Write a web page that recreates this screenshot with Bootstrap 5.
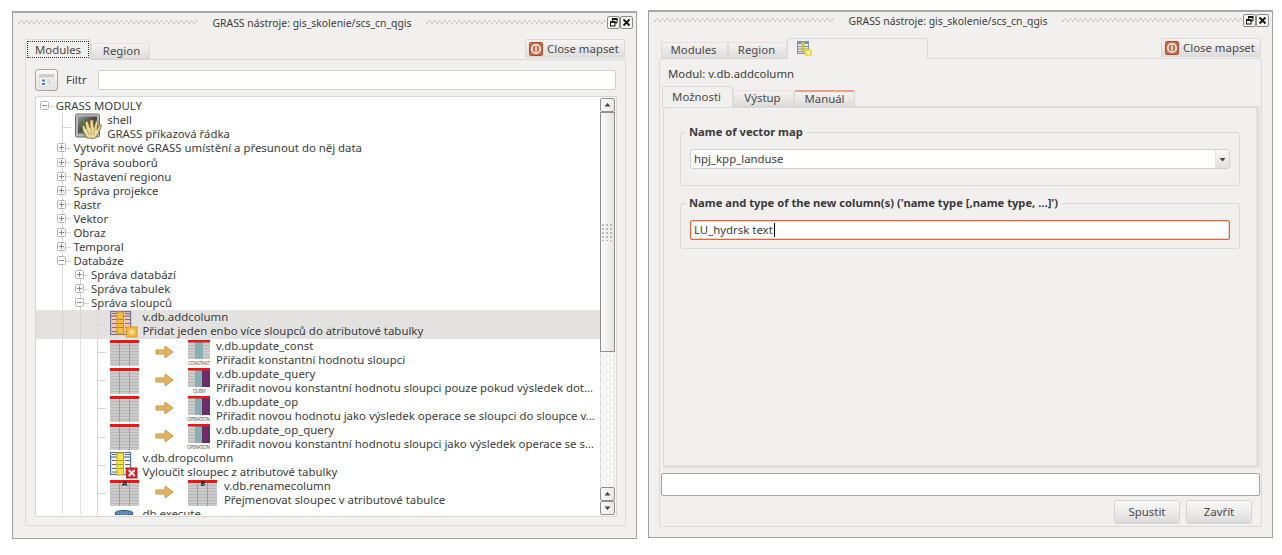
<!DOCTYPE html>
<html lang="cs">
<head>
<meta charset="utf-8">
<meta name="viewport" content="width=device-width, initial-scale=1">
<title>GRASS nástroje</title>
<link href="https://cdn.jsdelivr.net/npm/bootstrap@5.3.0/dist/css/bootstrap.min.css" rel="stylesheet">
<style>
body{width:1282px;height:555px;overflow:hidden;background:#fff;font-family:"Noto Sans","Open Sans",sans-serif;font-size:11.4px;line-height:14px;color:#3c3c3c;padding:10px 0 0 12px;gap:11px}
svg{display:block;flex:none}
.dock{width:625px;height:528px;background:#f1f0ee;border:1px solid #a0a0a0;border-top:2px solid #a9a9a9;flex:none}
.dock-a{margin-top:1px}
.dock-b{height:528px}
.titlebar{height:26px;padding:2px 3px 9px 5px}
.dock-b .titlebar{padding-top:1px;padding-bottom:10px}
.grip{height:5px;width:180px;background:radial-gradient(circle at 1px 1px,#d0cfcd .8px,transparent 1.1px) 0 2px/5px 5px,radial-gradient(circle at 1px 1px,#d0cfcd .8px,transparent 1.1px) 2.5px 0/5px 5px}
.caption{width:228px;font-size:10.4px;text-align:center;white-space:nowrap}
.tbtn{width:13px;height:13px;border:1px solid #8b8b8b;border-radius:2px;background:#f6f6f5}
.tabrow{height:21px;margin:0 11px 0 12px;position:relative;z-index:1}
.qtab{border:1px solid #dcdad8;border-bottom-color:#d5d3d1;border-top-color:#f0dcd5;background:linear-gradient(#f4f3f2,#dddcda);height:17px;white-space:nowrap;border-radius:2px 2px 0 0;color:#4a4a4a}
.qtab.on{background:#f1f0ee;border:1px solid #dcdad8;border-bottom:0;height:21px}
.closer{width:100px;height:19px;border:1px solid #dcdad8;border-radius:2px 2px 0 0;background:linear-gradient(#f6f5f4,#dedddb);gap:4px;padding-left:3px;color:#4a4a4a;white-space:nowrap}
.pane{border:1px solid #dcdad8;border-radius:2px;margin-top:-1px}
.pane-a{margin-left:12px;width:601px;height:467px;padding:9px}
.focus{border:1px dotted #333;margin:1px 2px 1px 1px;height:17px;width:62px;text-align:center;line-height:16px}
.tool{width:23px;height:22px;border:1px solid #a5a4a2;border-radius:3px;background:linear-gradient(#f8f8f7,#e6e5e3)}
.field{background:#fff;border:1px solid #d4d2d0;border-radius:2px}
.tree{width:582px;height:421px;margin-top:5px;border:1px solid #d8d6d4;padding:1px 1px 1px 0;border-radius:2px;background:#fff;overflow:hidden}
.rows{width:565px;overflow:hidden;color:#3c3c3c;padding-top:1.2px}
.r{height:14.08px;display:flex;white-space:nowrap;line-height:14.08px}
.r.dbl{height:28.16px}
.r.sel{background:#e3e2e0}
.g{width:17.6px;flex:none;background:linear-gradient(#d0d0d0,#d0d0d0) 8.5px 0/1px 100% no-repeat;-webkit-mask:repeating-linear-gradient(#000 0 1.2px,rgba(0,0,0,.35) 1.2px 2px)}
.g0{width:17.6px;flex:none}
.gx{width:17.6px;flex:none;background:linear-gradient(#d5d5d5,#d5d5d5) 8.5px 0/1px 100% no-repeat,linear-gradient(#d5d5d5,#d5d5d5) 9px 50%/9px 1px no-repeat}
.gx.first{background:linear-gradient(#d5d5d5,#d5d5d5) 9px 50%/9px 1px no-repeat}
.gx svg{margin:2px 0 0 3.6px}
.t{padding-left:2.2px}
.ic{width:36px;padding-left:3.5px;flex:none}
.ic2{width:109.5px;padding-left:4px;flex:none}
.ic2.wide{width:117.5px}
.sb{width:15px;flex:none}
.sbtn{height:14px;border:1px solid #8f8f8f;border-radius:2px;background:linear-gradient(90deg,#fdfdfd,#e9e8e7)}
.thumb{height:240px;border:1px solid #8f8f8f;background:linear-gradient(90deg,#fbfbfb,#e6e5e4)}
.trough{border:1px dotted #c4c4c4;border-width:0 1px;background:repeating-conic-gradient(#efefef 0 25%,#fff 0 50%) 0 0/2px 2px}
.dots{width:11px;height:17px;background:radial-gradient(circle at 1px 1px,#bbb .9px,transparent 1.1px) 0 0/4px 4px}
.pane-b{margin-left:10px;width:603px;height:469px;padding:0 1px}
.modul{height:27px;padding:8px 0 0 7px}
.subtabs{height:21px;margin-left:1px;position:relative;z-index:1}
.inner{height:362px;margin:-1px 0 0 2px;border:1px solid #dcdad8;border-top:2px solid #dedcda;border-right:4px solid #e1dfdd;border-bottom:3px solid #e1dfdd;border-radius:3px;padding:24px 16px 0 16px}
.grp{border:1px solid #dcdad8;border-radius:3px;padding:0 9px}
.leg{height:14px;margin-top:-8px;margin-left:-4px;padding:0 4px 0 3px;background:#f1f0ee;width:max-content;font-weight:700;font-size:11.2px;color:#3a3a3a}
.push{width:66px;height:23px;border:1px solid #d6d4d2;border-radius:3px;background:linear-gradient(#f9f9f8,#dededc);box-shadow:0 1px 0 #dcdad8;color:#4a4a4a}
</style>
</head>
<body class="d-flex align-items-start">
<svg width="0" height="0" class="position-absolute">
<defs>
<linearGradient id="shellg" x2="1" y2="1"><stop stop-color="#999"/><stop offset=".5" stop-color="#444"/><stop offset="1" stop-color="#777"/></linearGradient>
<symbol id="plus" viewBox="0 0 9 9"><rect x=".5" y=".5" width="8" height="8" rx="1" fill="#fff" stroke="#b4b4b4"/><path d="M2 4.500h5M4.500 2v5" stroke="#8a8a8a"/></symbol>
<symbol id="minus" viewBox="0 0 9 9"><rect x=".5" y=".5" width="8" height="8" rx="1" fill="#fff" stroke="#b4b4b4"/><path d="M2 4.500h5" stroke="#8a8a8a"/></symbol>
<symbol id="grid" viewBox="0 0 29 26"><rect width="29" height="26" fill="#cbcbcb"/><path d="M0 5.500h29M0 8.500h29M0 11.500h29M0 14.500h29M0 17.500h29M0 20.500h29M0 23.500h29" stroke="#b8b8b8"/><path d="M9.500 3v23M19.500 3v23" stroke="#8c8c8c" stroke-width=".7"/><rect width="29" height="3" fill="#f01414"/></symbol>
<symbol id="arrow" viewBox="0 0 19 14"><path d="M1 5h9V1l8 6-8 6V9H1z" fill="#e6b15c" stroke="#c8974a"/></symbol>
<symbol id="const" viewBox="0 0 22 20"><rect width="22" height="19" fill="#ccc"/><path d="M0 5.500h22M0 8.500h22M0 11.500h22M0 14.500h22M0 17.500h22" stroke="#bababa"/><rect x="7" y="2" width="8" height="17" fill="#87b0b0"/><rect width="22" height="2.500" fill="#ee1616"/></symbol>
<symbol id="query" viewBox="0 0 22 20"><rect width="22" height="19" fill="#ccc"/><path d="M0 5.500h7M0 8.500h7M0 11.500h7M0 14.500h7M0 17.500h7" stroke="#bababa"/><rect x="7" y="2" width="7" height="17" fill="#87b0b0"/><rect x="14" y="2" width="8" height="17" fill="#6a2c6a"/><rect width="22" height="2.500" fill="#ee1616"/></symbol>
<symbol id="power" viewBox="0 0 14 14"><rect x=".5" y=".5" width="13" height="13" rx="1.500" fill="#cf6a45" stroke="#b24c33"/><circle cx="7" cy="7" r="4.200" fill="none" stroke="#fff" stroke-width="1.500"/><path d="M7 4.500v5" stroke="#fff" stroke-width="1.500"/></symbol>
<symbol id="float" viewBox="0 0 11 11"><path d="M4.500 4V2h4.500v4H7" fill="none" stroke="#111"/><path d="M4 2h5.500" stroke="#111" stroke-width="2"/><rect x="2.500" y="5" width="4.500" height="4" fill="#fff" stroke="#111"/><path d="M2 5h5.500" stroke="#111" stroke-width="1.800"/></symbol>
<symbol id="cross" viewBox="0 0 11 11"><path d="M2.500 2.500l6 6M8.500 2.500l-6 6" stroke="#111" stroke-width="1.800"/></symbol>
<symbol id="up" viewBox="0 0 13 12"><path d="M3.500 7.500l3-3.500 3 3.500z" fill="#444"/></symbol>
<symbol id="down" viewBox="0 0 13 12"><path d="M3.500 4.500l3 3.500 3-3.500z" fill="#444"/></symbol>
</defs>
</svg>

<section class="dock dock-a">
  <div class="titlebar d-flex align-items-center">
    <div class="grip"></div><div class="caption">GRASS nástroje: gis_skolenie/scs_cn_qgis</div><div class="grip"></div>
    <div class="tbtn ms-auto"><svg width="11" height="11"><use href="#float"/></svg></div><div class="tbtn"><svg width="11" height="11"><use href="#cross"/></svg></div>
  </div>
  <div class="tabrow d-flex align-items-end">
    <div class="qtab on" style="width:66px"><div class="focus">Modules</div></div>
    <div class="qtab text-center" style="width:59px;padding-left:2px">Region</div>
    <div class="closer d-flex align-items-center ms-auto mb-auto"><svg width="14" height="14"><use href="#power"/></svg>Close mapset</div>
  </div>
  <div class="pane pane-a">
    <div class="d-flex align-items-center">
      <div class="tool d-flex align-items-center justify-content-center"><svg width="15" height="13" viewBox="0 0 15 13"><rect x=".5" y=".5" width="14" height="12" fill="#f5f5f5" stroke="#ddd"/><path d="M0 2h15" stroke="#ccc" stroke-width="3"/><path d="M3 6.500h3M3 10h3" stroke="#3b82d0" stroke-width="2"/><path d="M8 6h5M8 10h5M8 8h4" stroke="#c5c5c5"/></svg></div>
      <div style="width:40px;padding-left:8px">Filtr</div>
      <div class="field flex-fill" style="height:20px"></div>
    </div>
    <div class="tree d-flex">
      <div class="rows">
        <div class="r"><div class="gx first"><svg width="9" height="9"><use href="#minus"/></svg></div><div class="t">GRASS MODULY</div></div>
        <div class="r dbl"><div class="g0"></div><div class="gx"></div><div class="ic">
          <svg width="27" height="27" viewBox="0 0 27 27"><rect x=".5" y="1" width="24" height="23" rx="1.500" fill="#b8b8b4" stroke="#6e6e6a"/><rect x="3" y="3.500" width="19" height="17" fill="url(#shellg)"/><path d="M9 5v18M5 12l10 10M4 19h10" stroke="#35b23a"/><path d="M12 25L8 18q-2-6 1-6l2 4-1-7 3-1 2 7V7l3-.5 1 8 2-7 2 1-1 8 3-5 1.500 1-3 8-4 5z" fill="#ecd79c" stroke="#7b5c20" stroke-width=".8"/><path d="M14 22l-2-6M16 22l0-7M18 22l2-7" stroke="#b8934c" stroke-width=".7"/></svg></div><div>shell<br>GRASS příkazová řádka</div></div>
        <div class="r"><div class="g0"></div><div class="gx"><svg width="9" height="9"><use href="#plus"/></svg></div><div class="t">Vytvořit nové GRASS umístění a přesunout do něj data</div></div>
        <div class="r"><div class="g0"></div><div class="gx"><svg width="9" height="9"><use href="#plus"/></svg></div><div class="t">Správa souborů</div></div>
        <div class="r"><div class="g0"></div><div class="gx"><svg width="9" height="9"><use href="#plus"/></svg></div><div class="t">Nastavení regionu</div></div>
        <div class="r"><div class="g0"></div><div class="gx"><svg width="9" height="9"><use href="#plus"/></svg></div><div class="t">Správa projekce</div></div>
        <div class="r"><div class="g0"></div><div class="gx"><svg width="9" height="9"><use href="#plus"/></svg></div><div class="t">Rastr</div></div>
        <div class="r"><div class="g0"></div><div class="gx"><svg width="9" height="9"><use href="#plus"/></svg></div><div class="t">Vektor</div></div>
        <div class="r"><div class="g0"></div><div class="gx"><svg width="9" height="9"><use href="#plus"/></svg></div><div class="t">Obraz</div></div>
        <div class="r"><div class="g0"></div><div class="gx"><svg width="9" height="9"><use href="#plus"/></svg></div><div class="t">Temporal</div></div>
        <div class="r"><div class="g0"></div><div class="gx"><svg width="9" height="9"><use href="#minus"/></svg></div><div class="t">Databáze</div></div>
        <div class="r"><div class="g0"></div><div class="g"></div><div class="gx"><svg width="9" height="9"><use href="#plus"/></svg></div><div class="t">Správa databází</div></div>
        <div class="r"><div class="g0"></div><div class="g"></div><div class="gx"><svg width="9" height="9"><use href="#plus"/></svg></div><div class="t">Správa tabulek</div></div>
        <div class="r"><div class="g0"></div><div class="g"></div><div class="gx"><svg width="9" height="9"><use href="#minus"/></svg></div><div class="t">Správa sloupců</div></div>
        <div class="r dbl sel"><div class="g0"></div><div class="g"></div><div class="g"></div><div class="gx"></div><div class="ic">
          <svg width="28" height="28" viewBox="0 0 28 28"><rect x=".6" y="1.500" width="20" height="23" fill="#f0c9b8" stroke="#7d7296" stroke-width="1.200"/><path d="M1 6h20" stroke="#7d7296" stroke-width="1.200"/><path d="M2 3.500h18M2 9.500h18M2 13.500h18M2 17.500h18M2 21.500h14" stroke="#8d6d6d" stroke-dasharray="5 1.500"/><rect x="7" y="2" width="6.500" height="22" fill="#f5bd3c" stroke="#c99222"/><path d="M8 9.500h5M8 13.500h5M8 17.500h5" stroke="#b5842a"/><rect x="16.500" y="17" width="10.500" height="10" fill="#f2b735" stroke="#d99a1a"/><path d="M21.700 18.500v7M18.200 22h7M19.300 19.500l5 5M24.300 19.500l-5 5" stroke="#ffe3c0"/></svg></div><div>v.db.addcolumn<br>Přidat jeden enbo více sloupců do atributové tabulky</div></div>
        <div class="r dbl"><div class="g0"></div><div class="g"></div><div class="g"></div><div class="gx"></div><div class="ic2"><svg width="105" height="28" viewBox="0 0 105 28"><use href="#grid" y="1" width="29" height="26"/><use href="#arrow" x="45" y="6" width="19" height="14"/><use href="#const" x="78" y="1" width="22" height="20"/><text x="78" y="26" font-size="4.500" textLength="22" fill="#555">CONSTANT</text></svg></div><div>v.db.update_const<br>Přiřadit konstantní hodnotu sloupci</div></div>
        <div class="r dbl"><div class="g0"></div><div class="g"></div><div class="g"></div><div class="gx"></div><div class="ic2"><svg width="105" height="28" viewBox="0 0 105 28"><use href="#grid" y="1" width="29" height="26"/><use href="#arrow" x="45" y="6" width="19" height="14"/><use href="#query" x="78" y="1" width="22" height="20"/><text x="83" y="26" font-size="4.500" textLength="13" fill="#555">QUERY</text></svg></div><div>v.db.update_query<br>Přiřadit novou konstantní hodnotu sloupci pouze pokud výsledek dot…</div></div>
        <div class="r dbl"><div class="g0"></div><div class="g"></div><div class="g"></div><div class="gx"></div><div class="ic2"><svg width="105" height="28" viewBox="0 0 105 28"><use href="#grid" y="1" width="29" height="26"/><use href="#arrow" x="45" y="6" width="19" height="14"/><use href="#query" x="78" y="1" width="22" height="20"/><text x="77" y="26" font-size="4.500" textLength="23" fill="#555">OPERATION</text></svg></div><div>v.db.update_op<br>Přiřadit novou hodnotu jako výsledek operace se sloupci do sloupce v…</div></div>
        <div class="r dbl"><div class="g0"></div><div class="g"></div><div class="g"></div><div class="gx"></div><div class="ic2"><svg width="105" height="28" viewBox="0 0 105 28"><use href="#grid" y="1" width="29" height="26"/><use href="#arrow" x="45" y="6" width="19" height="14"/><use href="#query" x="78" y="1" width="22" height="20"/><text x="77" y="26" font-size="4.500" textLength="23" fill="#555">OPERATION</text></svg></div><div>v.db.update_op_query<br>Přiřadit novou konstantní hodnotu sloupci jako výsledek operace se s…</div></div>
        <div class="r dbl"><div class="g0"></div><div class="g"></div><div class="g"></div><div class="gx"></div><div class="ic">
          <svg width="28" height="28" viewBox="0 0 28 28"><rect x=".6" y="1.500" width="20" height="22" fill="#f4f5f0" stroke="#4b78b5" stroke-width="1.200"/><path d="M1 6h20" stroke="#4b78b5" stroke-width="1.200"/><path d="M2 3.500h18M2 9.500h18M2 13.500h18M2 17.500h18M2 21h14" stroke="#666" stroke-dasharray="5 1.500"/><rect x="7" y="2" width="6.500" height="22" fill="#fbe445" stroke="#c9a90e"/><path d="M8 9.500h5M8 13.500h5M8 17.500h5" stroke="#a89c38"/><rect x="16.500" y="17" width="10.500" height="10" fill="#d8262b" stroke="#bb1e22"/><path d="M18.700 19l6 6M24.700 19l-6 6" stroke="#fff" stroke-width="1.800"/></svg></div><div>v.db.dropcolumn<br>Vyloučit sloupec z atributové tabulky</div></div>
        <div class="r dbl"><div class="g0"></div><div class="g"></div><div class="g"></div><div class="gx"></div><div class="ic2 wide"><svg width="110" height="28" viewBox="0 0 110 28"><use href="#grid" y="1" width="29" height="26"/><text x="12" y="7" font-size="7.500" font-weight="700" fill="#222">A</text><use href="#arrow" x="45" y="6" width="19" height="14"/><use href="#grid" x="78" y="1" width="29" height="26"/><text x="90.500" y="7" font-size="7" font-weight="700" fill="#222">B</text></svg></div><div>v.db.renamecolumn<br>Přejmenovat sloupec v atributové tabulce</div></div>
        <div class="r dbl"><div class="g0"></div><div class="g"></div><div class="g"></div><div class="gx"></div><div class="ic"><svg width="28" height="28" viewBox="0 0 28 28"><path d="M5 6v16q9 6 18 0V6z" fill="#3767a8"/><ellipse cx="14" cy="6" rx="9" ry="2.500" fill="#5d8cc6" stroke="#2c5a99"/></svg></div><div>db.execute</div></div>
      </div>
      <div class="sb d-flex flex-column">
        <div class="sbtn"><svg width="13" height="12"><use href="#up"/></svg></div>
        <div class="thumb d-flex align-items-center justify-content-center"><div class="dots"></div></div>
        <div class="trough flex-fill"></div>
        <div class="sbtn"><svg width="13" height="12"><use href="#up"/></svg></div>
        <div class="sbtn"><svg width="13" height="12"><use href="#down"/></svg></div>
      </div>
    </div>
  </div>
</section>

<section class="dock dock-b">
  <div class="titlebar d-flex align-items-center">
    <div class="grip"></div><div class="caption">GRASS nástroje: gis_skolenie/scs_cn_qgis</div><div class="grip"></div>
    <div class="tbtn ms-auto"><svg width="11" height="11"><use href="#float"/></svg></div><div class="tbtn"><svg width="11" height="11"><use href="#cross"/></svg></div>
  </div>
  <div class="tabrow d-flex align-items-end">
    <div class="qtab text-center" style="width:67px;padding-right:2px">Modules</div>
    <div class="qtab text-center" style="width:59px;padding-right:2px">Region</div>
    <div class="qtab on" style="width:141px;padding:2px 0 0 9px"><svg width="15" height="15" viewBox="0 0 15 15"><rect x=".5" y=".5" width="11" height="12" fill="#dfe6ee" stroke="#7894b5"/><path d="M1 2h10" stroke="#7894b5" stroke-width="2"/><path d="M1 5.500h10M1 8h10M1 10.500h10" stroke="#8296a8"/><path d="M6 1v11" stroke="#cfc33c" stroke-width="3"/><rect x="8.500" y="9" width="5.500" height="5" fill="#fff4a0" stroke="#eed42a" stroke-width="1.500"/></svg></div>
    <div class="closer d-flex align-items-center ms-auto mb-auto"><svg width="14" height="14"><use href="#power"/></svg>Close mapset</div>
  </div>
  <div class="pane pane-b">
    <div class="modul">Modul: v.db.addcolumn</div>
    <div class="subtabs d-flex align-items-end">
      <div class="qtab on text-center" style="width:71px;padding:3px 2px 0 0">Možnosti</div>
      <div class="qtab text-center" style="width:61px;padding-right:2px">Výstup</div>
      <div class="qtab text-center" style="width:61px;border-top:2px solid #f0a082;line-height:13px">Manuál</div>
    </div>
    <div class="inner">
      <div class="grp" style="height:54px">
        <div class="leg">Name of vector map</div>
        <div class="field d-flex" style="height:20px;margin-top:10px"><div class="flex-fill" style="padding:2px 3px">hpj_kpp_landuse</div><div class="border-start" style="width:14px;background:linear-gradient(#f9f9f8,#e2e1df)"><svg width="13" height="18" viewBox="0 0 13 18"><path d="M3.500 8h6l-3 3.500z" fill="#444"/></svg></div></div>
      </div>
      <div class="grp" style="height:46px;margin-top:17px">
        <div class="leg">Name and type of the new column(s) ('name type [,name type, ...]')</div>
        <div class="field d-flex align-items-center" style="height:20px;margin-top:10px;border-color:#d9673f;box-shadow:inset 0 0 0 .5px #f2a385;padding-left:3px">LU_hydrsk text<span style="width:1px;height:14px;margin-left:1px;background:#000"></span></div>
      </div>
    </div>
    <div class="field" style="height:23px;margin:5px 0 0;border-color:#a3a2a0"></div>
    <div class="d-flex justify-content-end" style="gap:6px;padding:4px 8px 0 0">
      <div class="push d-flex align-items-center justify-content-center">Spustit</div>
      <div class="push d-flex align-items-center justify-content-center">Zavřít</div>
    </div>
  </div>
</section>
<script src="https://cdn.jsdelivr.net/npm/bootstrap@5.3.0/dist/js/bootstrap.bundle.min.js"></script>
</body>
</html>
